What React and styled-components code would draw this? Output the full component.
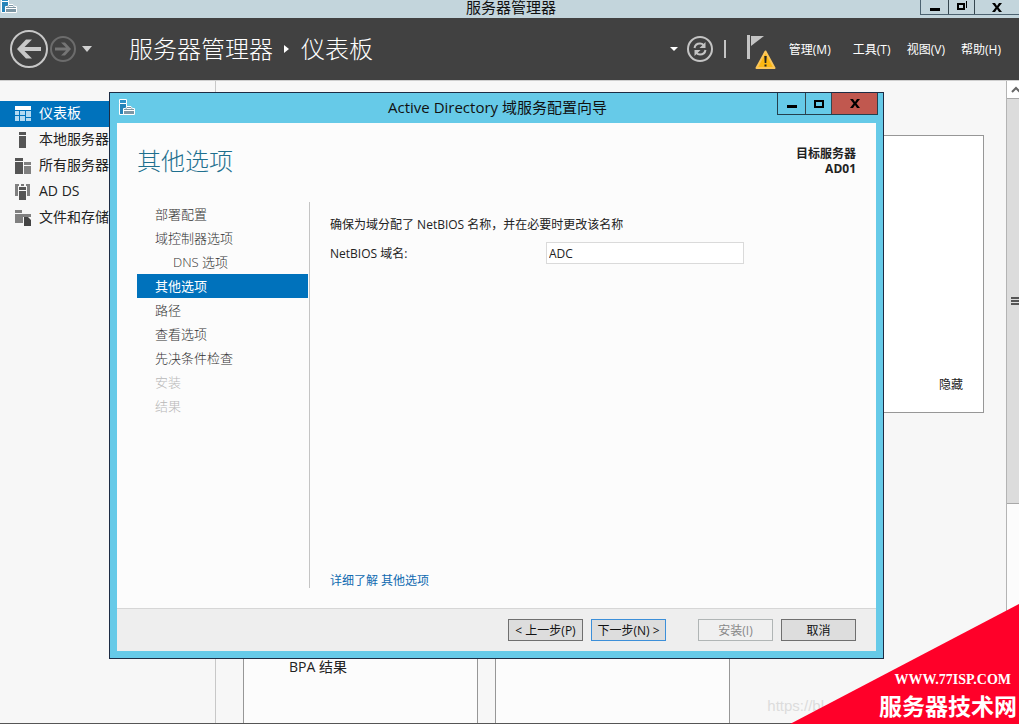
import React from "react";
import styled, { createGlobalStyle } from "styled-components";

const GlobalStyle = createGlobalStyle`
  * { box-sizing: border-box; }
  body {
    margin: 0;
    font-family: "Open Sans", "Noto Sans CJK SC", sans-serif;
    font-size: 12px;
    color: #222;
    background: #f7f7f7;
  }
  button, input { font: inherit; color: inherit; border-radius: 0; }
  svg { display: block; flex: none; }
`;

const Desktop = styled.div`
  position: relative;
  min-height: 100vh;
  display: flex;
  flex-direction: column;
  overflow: hidden;
`;

/* Title bars */

const MainTitleBar = styled.div`
  position: relative;
  height: 18px;
  display: flex;
  justify-content: space-between;
  align-items: flex-start;
  background: #c3d5dc;
  color: #111;
`;

const MainTitle = styled.div`
  flex: 1;
  margin-right: -99px;
  padding-right: 15px;
  text-align: center;
  font-size: 15px;
  line-height: 14px;
`;

const CaptionButtons = styled.div`
  position: relative;
  display: flex;
  height: ${(p) => p.$height}px;
  border: 1px solid ${(p) => p.$line};
  border-top: 0;
  ${(p) => (p.$flush ? "border-right: 0;" : "margin-right: -2px;")}
`;

const CaptionButton = styled.button`
  width: ${(p) => p.$width}px;
  padding: 0;
  border: 0;
  border-left: ${(p) => (p.$first ? "0" : "1px solid #35464f")};
  background: ${(p) => (p.$danger ? "#c1584f" : "transparent")};
  display: flex;
  align-items: center;
  justify-content: center;
`;

/* Header */

const Header = styled.header`
  height: 62px;
  display: flex;
  align-items: center;
  padding: 0 18px 0 10px;
  background: #414141;
  color: #fff;
`;

const IconButton = styled.button`
  padding: 0;
  border: 0;
  background: transparent;
  margin-left: ${(p) => p.$gap || 0}px;
`;

const Breadcrumb = styled.div`
  flex: 1;
  display: flex;
  align-items: center;
  gap: 11px;
  margin-left: 36px;
  font-size: 24px;
  font-weight: 300;
  line-height: 36px;
  white-space: nowrap;
`;

const Divider = styled.span`
  width: 2px;
  height: 18px;
  margin-left: 11px;
  background: #c4c4c4;
`;

const Menu = styled.nav`
  display: flex;
  gap: 16px;
  margin-left: 13px;
`;

const MenuItem = styled.button`
  min-width: ${(p) => p.$min || 0}px;
  padding: 2px 0 0;
  border: 0;
  background: transparent;
  color: #fff;
  font-size: 12px;
  line-height: 18px;
  text-align: left;
  white-space: nowrap;
`;

/* Page body */

const Body = styled.div`
  flex: 1;
  display: flex;
  border-top: 1px solid #cfcfcf;
  border-bottom: 1px solid #555;
`;

const Sidebar = styled.nav`
  width: 216px;
  padding-top: 20px;
  border-right: 1px solid #c8c8c8;
`;

const SideItem = styled.a`
  display: flex;
  align-items: center;
  gap: 8px;
  height: 26px;
  padding-left: 15px;
  font-size: 14px;
  line-height: 24px;
  padding-bottom: 2px;
  text-decoration: none;
  color: ${(p) => (p.$active ? "#fff" : "#222")};
  background: ${(p) => (p.$active ? "#0072bc" : "transparent")};
`;

const SideIcon = styled.svg`
  margin-top: 2px;
`;

const Main = styled.main`
  flex: 1;
  display: flex;
  flex-direction: column;
  gap: 28px;
  padding: 54px 22px 0 27px;
`;

const WelcomePanel = styled.section`
  height: 278px;
  display: flex;
  justify-content: flex-end;
  align-items: flex-end;
  padding: 18px 20px;
  border: 1px solid #979797;
  background: #fff;
`;

const HideButton = styled.button`
  padding: 0;
  border: 0;
  background: transparent;
  line-height: 18px;
`;

const Cards = styled.div`
  flex: 1;
  display: flex;
  gap: 17px;
`;

const Card = styled.section`
  width: 235px;
  display: flex;
  flex-direction: column;
  justify-content: flex-end;
  padding: 0 45px 46px;
  border: 1px solid #979797;
  border-bottom: 0;
  background: #fcfcfc;
  font-size: 14px;
  line-height: 20px;
`;

const ScrollBar = styled.div`
  width: 13px;
  display: flex;
  flex-direction: column;
  border-left: 1px solid #b4b4b4;
  background: #fcfcfc;
  overflow: hidden;
`;

const ScrollUp = styled.button`
  height: 17px;
  padding: 0 0 0 4px;
  border: 0;
  background: #fff;
`;

const ScrollThumb = styled.div`
  flex: 0 1 406px;
  display: flex;
  align-items: center;
  padding-left: 4px;
  border: 1px solid #a8a8a8;
  border-right: 0;
  border-left: 0;
  background: #dcdcdc;
`;

/* Wizard window */

const Wizard = styled.section`
  position: absolute;
  top: 92px;
  right: 135px;
  bottom: 65px;
  left: 109px;
  display: flex;
  flex-direction: column;
  padding: 0 7px 7px;
  border: 1px solid #1d2c44;
  background: #66cae8;
`;

const WizardTitleBar = styled.div`
  height: 30px;
  display: flex;
  align-items: flex-start;
  color: #111;
`;

const WizardIcon = styled.span`
  padding: 6px 0 0 2px;
`;

const WizardTitle = styled.h1`
  flex: 1;
  margin: 0 -83px 0 0;
  text-align: center;
  font-size: 15px;
  font-weight: 400;
  line-height: 28px;
`;

const WizardContent = styled.div`
  flex: 1;
  display: flex;
  flex-direction: column;
  padding: 20px;
  background: #fcfcfc;
`;

const WizardHeader = styled.div`
  display: flex;
  justify-content: space-between;
  height: 59px;
`;

const StepHeading = styled.h2`
  margin: 0;
  font-size: 24px;
  font-weight: 300;
  line-height: 36px;
  color: #1e6f8e;
`;

const Target = styled.div`
  padding-top: 3px;
  text-align: right;
  font-weight: 700;
  line-height: 15px;
`;

const WizardColumns = styled.div`
  flex: 1;
  display: flex;
`;

const Steps = styled.nav`
  width: 173px;
  padding-right: 1px;
  border-right: 1px solid #c4c4c4;
`;

const Step = styled.a`
  display: block;
  height: 24px;
  padding-left: ${(p) => (p.$nested ? 36 : 18)}px;
  font-size: 13px;
  font-weight: ${(p) => (p.$active ? 400 : 300)};
  line-height: 24px;
  text-decoration: none;
  color: ${(p) => (p.$active ? "#fff" : p.$muted ? "#b8b8b8" : "#333")};
  background: ${(p) => (p.$active ? "#0072bc" : "transparent")};
`;

const Form = styled.form`
  flex: 1;
  display: flex;
  flex-direction: column;
  padding: 14px 0 0 20px;
`;

const Hint = styled.p`
  margin: 0 0 8px;
  line-height: 18px;
`;

const Field = styled.div`
  display: flex;
  align-items: center;
`;

const FieldLabel = styled.label`
  width: 216px;
`;

const TextBox = styled.input`
  width: 198px;
  height: 22px;
  padding: 0 2px;
  border: 1px solid #dadada;
  background: #fff;
`;

const MoreLink = styled.a`
  margin-top: auto;
  line-height: 14px;
  color: #0f6ab0;
  text-decoration: none;
`;

const WizardFooter = styled.footer`
  height: 43px;
  display: flex;
  justify-content: flex-end;
  align-items: flex-start;
  gap: 8px;
  padding: 10px 20px;
  border-top: 1px solid #d6d6d6;
  background: #eee;
`;

const PushButton = styled.button`
  width: 75px;
  height: 22px;
  padding: 0;
  margin-left: ${(p) => (p.$apart ? 24 : 0)}px;
  border: 1px solid ${(p) => (p.$primary ? "#3c8fd9" : "#6f6f6f")};
  background: #ddd;
  color: #111;
  white-space: nowrap;
  &:disabled {
    border-color: #b0b5b5;
    background: #f0f0f0;
    color: #888;
  }
`;

/* Corner banner */

const Corner = styled.aside`
  position: absolute;
  right: 0;
  bottom: 0;
  width: 229px;
  height: 120px;
  display: flex;
  flex-direction: column;
  justify-content: flex-end;
  align-items: flex-end;
  clip-path: polygon(0 100%, 100% 0, 100% 100%);
  background: #ff0029;
  color: #fff;
  white-space: nowrap;
`;

const CornerUrl = styled.span`
  padding-right: 8px;
  font-family: "Liberation Serif", serif;
  font-size: 14px;
  font-weight: 700;
  line-height: 16px;
`;

const CornerName = styled.span`
  padding-right: 2px;
  font-size: 23px;
  font-weight: 700;
  line-height: 36px;
`;

const Watermark = styled.span`
  position: absolute;
  right: 195px;
  bottom: 8px;
  font-family: "Liberation Sans", sans-serif;
  font-size: 15px;
  line-height: 20px;
  color: #dcdcdc;
`;

/* Drawings */

const ServerManagerIcon = () => (
  <svg width="16" height="17" viewBox="0 0 16 17" aria-hidden="true">
    <path d="M.5 .5h7v4h-7z" fill="#2f92c8" stroke="#fff" />
    <path d="M.5 4.500h7v5l-3 2v4h-4z" fill="#2583b8" stroke="#fff" />
    <path d="M4.500 9.500h2l1.500-2h4l1.500 2h2v6h-11z" fill="#7d97a5" stroke="#fff" />
    <path d="M4.500 11.500h11M7.500 9.500h5" stroke="#fff" fill="none" />
  </svg>
);

const MinimizeGlyph = () => (
  <svg width="10" height="10" viewBox="0 0 10 10" aria-hidden="true">
    <path d="M0 6h10v3H0z" fill="#000" />
  </svg>
);

const MaximizeGlyph = () => (
  <svg width="10" height="8" viewBox="0 0 10 8" aria-hidden="true">
    <path d="M1 1h8v6H1z" fill="none" stroke="#000" strokeWidth="2" />
  </svg>
);

const RestoreGlyph = () => (
  <svg width="10" height="12" viewBox="0 0 10 12" aria-hidden="true">
    <path d="M1 3h6v5H1z" fill="none" stroke="#000" strokeWidth="2" />
    <path d="M9.500 0v7" fill="none" stroke="#000" />
  </svg>
);

const CloseGlyph = () => (
  <svg width="10" height="9" viewBox="0 0 10 9" aria-hidden="true">
    <path d="M0 0h3l2 3 2-3h3L6.500 4.500 10 9H7L5 6 3 9H0l3.500-4.500z" fill="#000" />
  </svg>
);

const BackIcon = () => (
  <svg width="38" height="38" viewBox="0 0 38 38" fill="none">
    <circle cx="19" cy="19" r="18" stroke="#c8c8c8" strokeWidth="2" />
    <path d="M7 19L16 9.500h6L14.500 17H31v4H14.500L22 28.500h-6z" fill="#c8c8c8" />
  </svg>
);

const ForwardIcon = () => (
  <svg width="26" height="26" viewBox="0 0 26 26" fill="none">
    <circle cx="13" cy="13" r="12" stroke="#6c6c6c" strokeWidth="2" />
    <path d="M21 13L15 6.500h-4L16 11.500H5v3h11L11 19.500h4z" fill="#757575" />
  </svg>
);

const RefreshIcon = () => (
  <svg width="26" height="26" viewBox="0 0 26 26" fill="none">
    <circle cx="13" cy="13" r="12" stroke="#c4c4c4" strokeWidth="2" />
    <path d="M7.500 12c.5-3 2.500-4.500 5.500-4.500 1.500 0 2.800.6 3.800 1.600M18.500 14c-.5 3-2.500 4.500-5.500 4.500-1.500 0-2.800-.6-3.800-1.600" stroke="#c4c4c4" strokeWidth="2" />
    <path d="M18.500 6v6h-6zM7.500 20v-6h6z" fill="#c4c4c4" />
  </svg>
);

const FlagIcon = () => (
  <svg width="30" height="36" viewBox="0 0 30 36">
    <path d="M1 2h3v24H1z" fill="#c4c4c4" />
    <path d="M5 3h13L5 13z" fill="#c4c4c4" />
    <path d="M19.500 18.500L28.500 35h-18z" fill="#fdb813" stroke="#fbc65a" strokeWidth="2" strokeLinejoin="round" />
    <path d="M18.300 23h2.400l-.4 7h-1.600zM18.500 31.500h2v2h-2z" fill="#222" />
  </svg>
);

const sideIcons = {
  dashboard: (
    <g fill="#b5daf2">
      <path d="M0 0h16v4H0z" fill="#fff" />
      <path d="M0 5h4v4H0zM0 10h4v5H0zM5 5h5v4H5zM5 10h5v5H5zM11 5h5v6h-5zM11 12h5v3h-5z" />
    </g>
  ),
  server: <path d="M4 0h7v3H4zM4 4h7v12H4z" fill="#555" />,
  servers: (
    <g>
      <path d="M0 0h8v3H0zM0 4h8v12H0z" fill="#555" />
      <path d="M9 4h7v3H9zM9 8h7v8H9z" fill="#808080" />
    </g>
  ),
  adds: (
    <g>
      <path d="M0 0h4v2H3v10H0zM15 0h-4v2h1v10h3z" fill="#808080" />
      <path d="M4 3h7v3H4zM4 7h7v9H4z" fill="#555" />
      <path d="M6 0h3v2H6z" fill="#777" />
    </g>
  ),
  storage: (
    <g>
      <path d="M0 0h7v3H0zM0 4h16v3H8v6H0z" fill="#808080" />
      <path d="M9 7h4l3 3v6H9z" fill="#444" />
    </g>
  ),
};

const sideItems = [
  ["dashboard", "仪表板"],
  ["server", "本地服务器"],
  ["servers", "所有服务器"],
  ["adds", "AD DS"],
  ["storage", "文件和存储"],
];

const steps = [
  { label: "部署配置" },
  { label: "域控制器选项" },
  { label: "DNS 选项", nested: true },
  { label: "其他选项", active: true },
  { label: "路径" },
  { label: "查看选项" },
  { label: "先决条件检查" },
  { label: "安装", muted: true },
  { label: "结果", muted: true },
];

export default function App() {
  return (
    <Desktop>
      <GlobalStyle />
      <MainTitleBar>
        <svg width="18" height="14" viewBox="-1 3 18 14" aria-hidden="true">
          <ServerManagerIcon />
        </svg>
        <MainTitle>服务器管理器</MainTitle>
        <CaptionButtons $height={15} $line="#4c6270" $flush>
          <CaptionButton $width={27} $first aria-label="最小化"><MinimizeGlyph /></CaptionButton>
          <CaptionButton $width={26} aria-label="还原"><RestoreGlyph /></CaptionButton>
          <CaptionButton $width={45} aria-label="关闭"><CloseGlyph /></CaptionButton>
        </CaptionButtons>
      </MainTitleBar>

      <Header>
        <IconButton aria-label="后退"><BackIcon /></IconButton>
        <IconButton $gap={2} aria-label="前进"><ForwardIcon /></IconButton>
        <IconButton $gap={5} aria-label="历史记录">
          <svg width="12" height="8" viewBox="0 0 12 8"><path d="M1 1h10L6 7z" fill="#d0d0d0" /></svg>
        </IconButton>
        <Breadcrumb>
          <span>服务器管理器</span>
          <svg width="6" height="10" viewBox="0 0 6 10"><path d="M0 1l5 4-5 4z" fill="#fff" /></svg>
          <span>仪表板</span>
        </Breadcrumb>
        <IconButton aria-label="更多">
          <svg width="8" height="5" viewBox="0 0 8 5"><path d="M0 0h8L4 4z" fill="#fff" /></svg>
        </IconButton>
        <IconButton $gap={9} aria-label="刷新"><RefreshIcon /></IconButton>
        <Divider />
        <IconButton $gap={20} aria-label="通知">
          <svg width="30" height="40" viewBox="0 -4 30 40"><FlagIcon /></svg>
        </IconButton>
        <Menu>
          <MenuItem $min={48}>管理(M)</MenuItem>
          <MenuItem $min={38}>工具(T)</MenuItem>
          <MenuItem>视图(V)</MenuItem>
          <MenuItem>帮助(H)</MenuItem>
        </Menu>
      </Header>

      <Body>
        <Sidebar>
          {sideItems.map(([icon, label], i) => (
            <SideItem key={icon} href="#" $active={i === 0}>
              <SideIcon width="16" height="16" viewBox="0 0 16 16" aria-hidden="true">{sideIcons[icon]}</SideIcon>
              {label}
            </SideItem>
          ))}
        </Sidebar>
        <Main>
          <WelcomePanel>
            <HideButton>隐藏</HideButton>
          </WelcomePanel>
          <Cards>
            <Card>BPA 结果</Card>
            <Card />
          </Cards>
        </Main>
        <ScrollBar>
          <ScrollUp aria-label="向上滚动">
            <svg width="10" height="8" viewBox="0 0 10 8"><path d="M1 6l4-4 4 4" fill="none" stroke="#666" strokeWidth="2" /></svg>
          </ScrollUp>
          <ScrollThumb>
            <svg width="8" height="8" viewBox="0 0 8 8"><path d="M0 1h8M0 4h8M0 7h8" stroke="#555" strokeWidth="2" /></svg>
          </ScrollThumb>
        </ScrollBar>
      </Body>

      <Watermark>https://bl</Watermark>

      <Wizard>
        <WizardTitleBar>
          <WizardIcon><ServerManagerIcon /></WizardIcon>
          <WizardTitle>Active Directory 域服务配置向导</WizardTitle>
          <CaptionButtons $height={22} $line="#24404e">
            <CaptionButton $width={27} $first aria-label="最小化"><MinimizeGlyph /></CaptionButton>
            <CaptionButton $width={26} aria-label="最大化"><MaximizeGlyph /></CaptionButton>
            <CaptionButton $width={46} $danger aria-label="关闭"><CloseGlyph /></CaptionButton>
          </CaptionButtons>
        </WizardTitleBar>
        <WizardContent>
          <WizardHeader>
            <StepHeading>其他选项</StepHeading>
            <Target>
              <div>目标服务器</div>
              <div>AD01</div>
            </Target>
          </WizardHeader>
          <WizardColumns>
            <Steps>
              {steps.map((s) => (
                <Step key={s.label} href="#" $nested={s.nested} $active={s.active} $muted={s.muted}>
                  {s.label}
                </Step>
              ))}
            </Steps>
            <Form onSubmit={(e) => e.preventDefault()}>
              <Hint>确保为域分配了 NetBIOS 名称，并在必要时更改该名称</Hint>
              <Field>
                <FieldLabel htmlFor="netbios">NetBIOS 域名:</FieldLabel>
                <TextBox id="netbios" type="text" defaultValue="ADC" />
              </Field>
              <MoreLink href="#">详细了解 其他选项</MoreLink>
            </Form>
          </WizardColumns>
        </WizardContent>
        <WizardFooter>
          <PushButton>&lt; 上一步(P)</PushButton>
          <PushButton $primary>下一步(N) &gt;</PushButton>
          <PushButton $apart disabled>安装(I)</PushButton>
          <PushButton>取消</PushButton>
        </WizardFooter>
      </Wizard>

      <Corner>
        <CornerUrl>WWW.77ISP.COM</CornerUrl>
        <CornerName>服务器技术网</CornerName>
      </Corner>
    </Desktop>
  );
}
